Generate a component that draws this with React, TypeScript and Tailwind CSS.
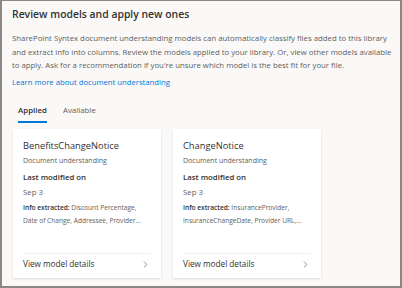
import { ChevronRight } from "lucide-react";

const models = [
  {
    name: "BenefitsChangeNotice",
    info: "Discount Percentage, Date of Change, Addressee, Provider...",
  },
  {
    name: "ChangeNotice",
    info: "InsuranceProvider, InsuranceChangeDate, Provider URL,...",
  },
];

function ModelCard({ name, info }: { name: string; info: string }) {
  return (
    <div className="flex h-[149px] w-[148px] flex-col bg-white px-[10px] shadow-[0_0.5px_2px_rgba(0,0,0,0.12)]">
      <div className="pt-[10px] text-[9.3px] leading-[14px] text-[#323130]">{name}</div>
      <div className="mt-[2px] text-[7px] leading-[11px] text-[#605e5c]">Document understanding</div>
      <div className="mt-[5px] text-[7.8px] font-semibold leading-[13px] text-[#323130]">Last modified on</div>
      <div className="mt-[2px] text-[7.8px] leading-[13px] text-[#605e5c]">Sep 3</div>
      <div className="mt-[2px] text-[6.6px] leading-[13px] text-[#605e5c]">
        <span className="font-semibold text-[#323130]">Info extracted:</span> {info}
      </div>
      <div className="mt-auto border-t border-[#f3f2f1]" />
      <div className="flex h-[24px] items-center justify-between pb-[2px] text-[8.2px] text-[#323130]">
        <span>View model details</span>
        <ChevronRight className="h-[11px] w-[11px] text-[#605e5c]" strokeWidth={1.5} />
      </div>
    </div>
  );
}

export default function App() {
  return (
    <div
      className="h-[288px] w-[402px] overflow-hidden border-2 border-t border-[#8a8886] bg-[#faf9f8]"
      style={{ fontFamily: '"Open Sans", "Noto Sans", sans-serif' }}
    >
      <div className="px-[10px] pt-[4px]">
        <h1 className="text-[10.4px] font-semibold leading-[18px] text-[#323130]">
          Review models and apply new ones
        </h1>
        <p className="mt-[9px] w-[382px] text-[7.8px] leading-[13.5px] text-[#605e5c]">
          SharePoint Syntex document understanding models can automatically classify files added to this library
          and extract info into columns. Review the models applied to your library. Or, view other models available
          to apply. Ask for a recommendation if you're unsure which model is the best fit for your file.
        </p>
        <a className="mt-[3px] block text-[7.7px] leading-[13px] text-[#0078d4]">
          Learn more about document understanding
        </a>
        <div className="mt-[14px] flex gap-[16px] pl-[6px]">
          <div className="flex flex-col">
            <span className="text-[7.9px] font-semibold leading-[14px] text-[#323130]">Applied</span>
            <span className="mt-[4px] h-[2px] bg-[#0078d4]" />
          </div>
          <span className="text-[7.9px] leading-[14px] text-[#605e5c]">Available</span>
        </div>
        <div className="mt-[6px] flex gap-[12px] pl-[1px]">
          {models.map((m) => (
            <ModelCard key={m.name} {...m} />
          ))}
        </div>
      </div>
    </div>
  );
}
